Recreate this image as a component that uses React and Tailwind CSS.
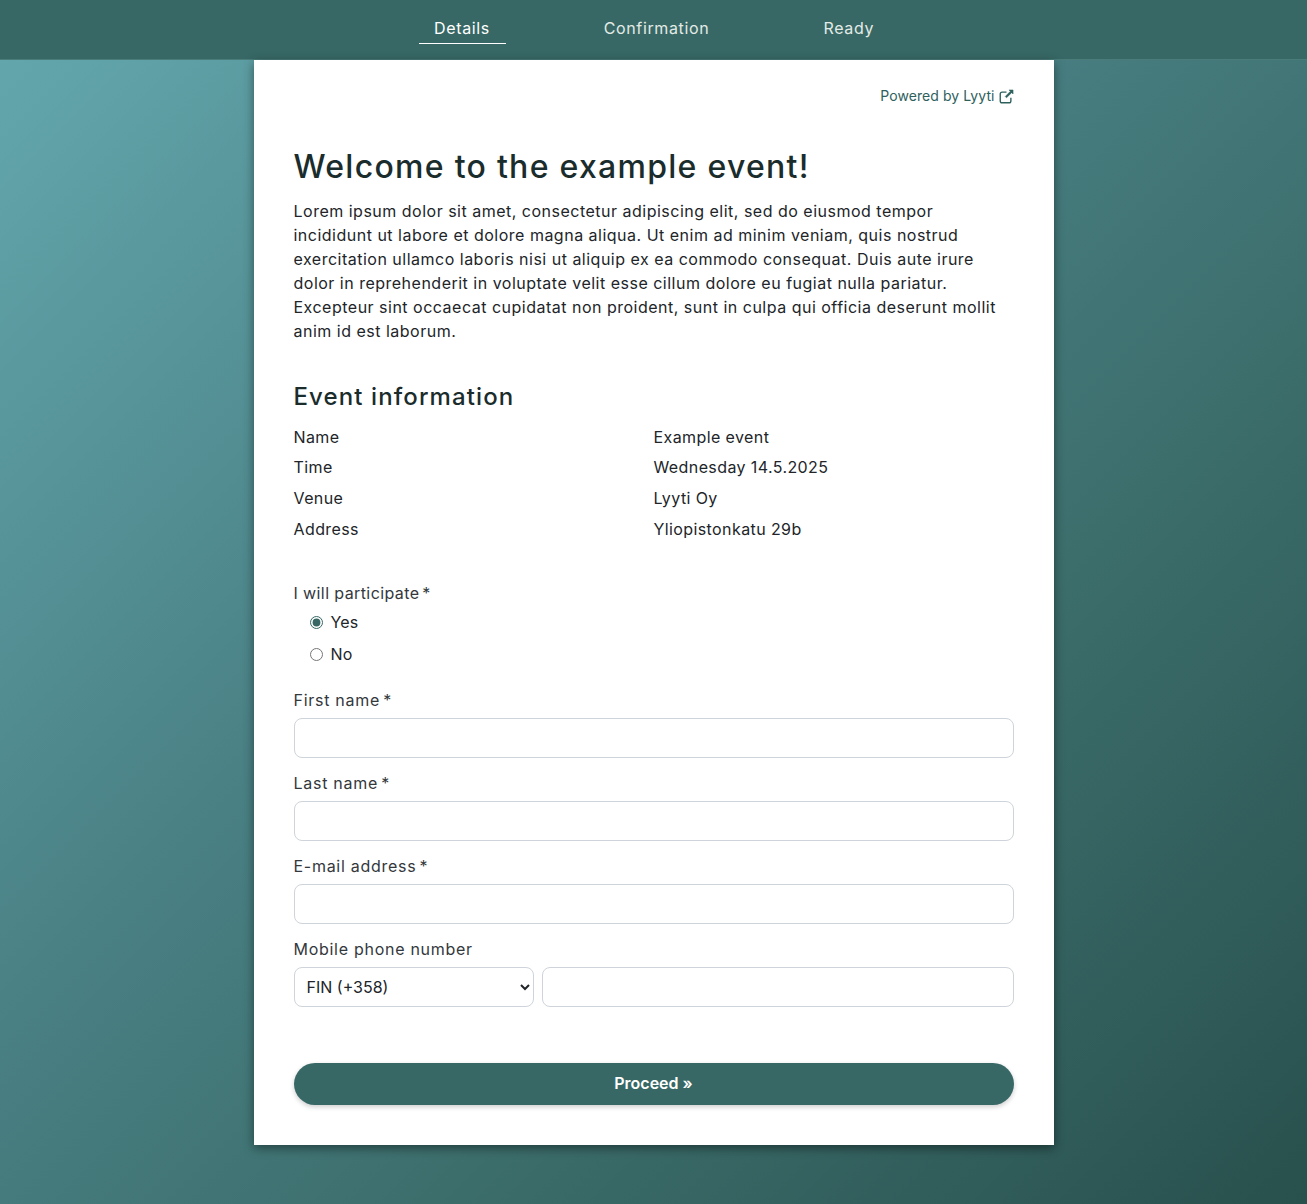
const inputCls = "block h-10 w-full rounded-lg border border-[#ced4da] bg-white px-3 text-base text-[#212529]";
const labelCls = "block text-base leading-6 tracking-[0.045em] text-[#33383c]";

const steps = [
  { label: "Details", active: true, cls: "w-[87px]" },
  { label: "Confirmation", cls: "w-[106px] ml-[98px]" },
  { label: "Ready", cls: "w-[50px] ml-[114px]" },
];

const info = [
  ["Name", "Example event", "h-[30px]"],
  ["Time", "Wednesday 14.5.2025", "h-[31px]"],
  ["Venue", "Lyyti Oy", "h-[31px]"],
  ["Address", "Yliopistonkatu 29b", "h-[30px]"],
];

function Field({ label, className }) {
  return (
    <div className={className}>
      <label className={labelCls}>
        {label}
        <span className="[word-spacing:-2px]"> *</span>
      </label>
      <input type="text" className={`${inputCls} mt-1.5`} />
    </div>
  );
}

function Radio({ label, checked, className }) {
  return (
    <label className={`flex h-6 items-center pl-4 text-[#212529] ${className || ""}`}>
      <input
        type="radio"
        name="participate"
        defaultChecked={checked}
        className="m-0 h-[13px] w-[13px] accent-[#376865]"
      />
      <span className="ml-[8px] tracking-[0.01em]">{label}</span>
    </label>
  );
}

export default function App() {
  return (
    <div
      className="min-h-[1204px] bg-[linear-gradient(135deg,#64a9af_0%,#4a8185_40%,#3c6e6c_65%,#28504d_100%)] text-base text-[#212529]"
      style={{ fontFamily: 'Inter, sans-serif' }}
    >
      <nav className="flex h-[60px] justify-center border-b border-[#4a7d7a] bg-[#376865] pr-[15px]">
        {steps.map((s) => (
          <div key={s.label} className={s.cls}>
            <div
              className={`mt-4 h-[28px] whitespace-nowrap border-b text-center leading-6 tracking-[0.04em] ${
                s.active ? "border-white text-white" : "border-transparent text-[#e4ebe6]"
              }`}
            >
              {s.label}
            </div>
          </div>
        ))}
      </nav>

      <main className="mx-auto h-[1085px] w-[800px] bg-white px-10 pt-[26px] shadow-[0_3px_10px_rgba(0,0,0,0.45)]">
        <div className="flex h-5 items-center justify-end text-sm tracking-[0.005em] text-[#2e615d]">
          Powered by Lyyti
          <svg viewBox="0 0 24 24" className="ml-1 h-[15px] w-[15px]" fill="none" stroke="currentColor" strokeWidth="2.2" strokeLinejoin="round">
            <path d="M19 14v5a3 3 0 0 1-3 3H5a3 3 0 0 1-3-3V8a3 3 0 0 1 3-3h7" />
            <path d="M16 1.5h6.5V8l-2.2-2.2L12 14l-2-2 8.2-8.3z" fill="currentColor" strokeWidth="0.8" />
          </svg>
        </div>

        <h1 className="mt-[41px] whitespace-nowrap text-[32px] font-medium leading-[40px] tracking-[0.04em] text-[#1a2c2c]">
          Welcome to the example event!
        </h1>
        <p className="mt-[12px] leading-6 tracking-[0.031em]">
          Lorem ipsum dolor sit amet, consectetur adipiscing elit, sed do eiusmod tempor
          <br />
          incididunt ut labore et dolore magna aliqua. Ut enim ad minim veniam, quis nostrud
          <br />
          exercitation ullamco laboris nisi ut aliquip ex ea commodo consequat. Duis aute irure
          <br />
          dolor in reprehenderit in voluptate velit esse cillum dolore eu fugiat nulla pariatur.
          <br />
          Excepteur sint occaecat cupidatat non proident, sunt in culpa qui officia deserunt mollit
          <br />
          anim id est laborum.
        </p>

        <h2 className="mt-[39px] text-2xl font-medium leading-[30px] tracking-[0.046em] text-[#1a2c2c]">Event information</h2>
        <div className="mt-[13px]">
          {info.map(([k, v, h]) => (
            <div key={k} className={`grid grid-cols-2 items-start leading-6 tracking-[0.025em] ${h}`}>
              <div>{k}</div>
              <div>{v}</div>
            </div>
          ))}
        </div>

        <div className="mt-[34px]">
          <div className="block text-base leading-6 tracking-[0.025em] text-[#33383c]">
            I will participate
            <span className="[word-spacing:-2px]"> *</span>
          </div>
          <Radio label="Yes" checked className="mt-[5px]" />
          <Radio label="No" className="mt-2" />
        </div>

        <Field label="First name" className="mt-[22px]" />
        <Field label="Last name" className="mt-[13px]" />
        <Field label="E-mail address" className="mt-[13px]" />

        <div className="mt-[13px]">
          <label className={labelCls}>Mobile phone number</label>
          <div className="mt-1.5 flex gap-2">
            <select className="h-10 w-[240px] rounded-lg border border-[#ced4da] bg-white pb-px pl-2 text-base text-[#212529]">
              <option>FIN (+358)</option>
            </select>
            <input type="text" className={`${inputCls} flex-1`} />
          </div>
        </div>

        <button
          type="button"
          className="mt-14 block h-[42px] w-full rounded-full bg-[#376865] pb-0.5 font-semibold text-white shadow-[0_2px_5px_rgba(0,0,0,0.2)]"
        >
          Proceed »
        </button>
      </main>
    </div>
  );
}
